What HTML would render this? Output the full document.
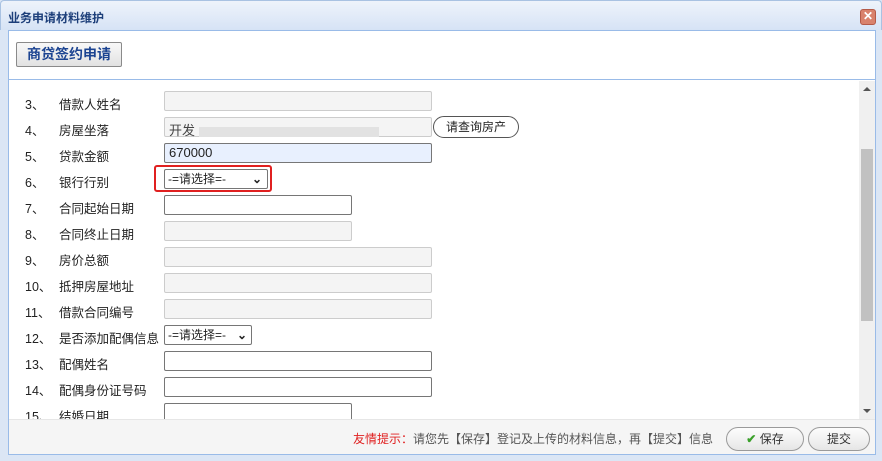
<!DOCTYPE html>
<html><head><meta charset="utf-8"><style>
*{margin:0;padding:0;box-sizing:border-box}
body{width:882px;height:461px;overflow:hidden;background:#dbe6f5;font-family:"Liberation Sans","Noto Sans CJK SC",sans-serif;font-size:12px;color:#222;position:relative}
.title{position:absolute;left:0;top:0;width:882px;height:30px;background:linear-gradient(#eef3fb,#d6e3f5);border:1px solid #a9c2e2;border-bottom:none;border-radius:4px 4px 0 0}
.title span{position:absolute;left:7px;top:8px;font-size:12px;font-weight:bold;color:#1d3f7a}
.close{position:absolute;left:859px;top:8px;width:16px;height:16px;background:#d9826c;border:1px solid #b45a48;border-radius:3px;color:#fff;font-size:12px;font-weight:bold;line-height:13px;text-align:center}
.panel{position:absolute;left:8px;top:30px;width:868px;height:425px;background:#fff;border:1px solid #99bbe8}
.head{position:absolute;left:0;top:0;width:866px;height:49px;border-bottom:1px solid #99bbe8;background:#fff}
.hbtn{position:absolute;left:7px;top:11px;width:106px;height:25px;border:1px solid #8a8a8a;background:linear-gradient(#f8f8f8,#e2e2e2);font-size:14px;font-weight:bold;color:#1b4391;text-align:center;line-height:23px;border-radius:2px}
.scroll{position:absolute;left:0;top:50px;width:866px;height:338px;overflow:hidden}
.sb{position:absolute;left:850px;top:0;width:16px;height:338px;background:#f0f0f0}
.thumb{position:absolute;left:2px;top:68px;width:12px;height:172px;background:#c1c1c1}
.row{position:absolute;left:0;height:26px;width:850px}
.n{position:absolute;left:16px;top:5px;font-size:12.5px}
.l{position:absolute;left:50px;top:5px;font-size:12.5px}
.in{position:absolute;left:155px;top:2px;width:268px;height:20px;border:1px solid #ccc;background:#f4f4f4;border-radius:2px}
.in.w{background:#fff;border-color:#767676}
.s{width:188px}
.sel{position:absolute;left:155px;top:2px;height:20px;border:1px solid #767676;border-radius:2px;background:#fff;font-size:12px;padding-left:3px;line-height:18px}
.foot{position:absolute;left:0;top:388px;width:866px;height:35px;background:#f5f5f5;border-top:1px solid #e6e6e6}
.tip{position:absolute;left:344px;top:10px;color:#555}
.tip b{color:#e02020;font-weight:normal}
.btn{position:absolute;top:7px;height:24px;border:1px solid #9a9a9a;border-radius:12px;background:linear-gradient(#fdfdfd,#e6e6e6);text-align:center;line-height:22px;color:#333}
</style></head><body>
<div class="title"><span>业务申请材料维护</span><div class="close">✕</div></div>
<div class="panel">
<div class="scroll">
 <div class="row" style="top:-24px"><div class="in"></div></div>
 <div class="row" style="top:8px"><span class="n">3、</span><span class="l">借款人姓名</span><div class="in"></div></div>
 <div class="row" style="top:34px"><span class="n">4、</span><span class="l">房屋坐落</span><div class="in" style="padding:2px 4px;font-size:13px;color:#444">开发<span style="display:inline-block;width:180px;height:10px;background:#e2e2e2;margin-left:4px;vertical-align:middle"></span></div><div style="position:absolute;left:424px;top:1px;width:86px;height:22px;border:1px solid #555;border-radius:11px;background:#fff;text-align:center;line-height:20px;font-size:12px">请查询房产</div></div>
 <div class="row" style="top:60px"><span class="n">5、</span><span class="l">贷款金额</span><div class="in" style="background:#e8f0fe;border-color:#777;padding:1px 4px;font-size:13px;color:#222">670000</div></div>
 <div class="row" style="top:86px"><span class="n">6、</span><span class="l">银行行别</span><div style="position:absolute;left:145px;top:-2px;width:118px;height:27px;border:2px solid #e02020;border-radius:3px"></div><div class="sel" style="width:104px">-=请选择=- <span style="position:absolute;right:5px;top:0;font-weight:bold">⌄</span></div></div>
 <div class="row" style="top:112px"><span class="n">7、</span><span class="l">合同起始日期</span><div class="in w s"></div></div>
 <div class="row" style="top:138px"><span class="n">8、</span><span class="l">合同终止日期</span><div class="in s"></div></div>
 <div class="row" style="top:164px"><span class="n">9、</span><span class="l">房价总额</span><div class="in"></div></div>
 <div class="row" style="top:190px"><span class="n">10、</span><span class="l">抵押房屋地址</span><div class="in"></div></div>
 <div class="row" style="top:216px"><span class="n">11、</span><span class="l">借款合同编号</span><div class="in"></div></div>
 <div class="row" style="top:242px"><span class="n">12、</span><span class="l">是否添加配偶信息</span><div class="sel" style="width:88px">-=请选择=- <span style="position:absolute;right:4px;top:0;font-weight:bold">⌄</span></div></div>
 <div class="row" style="top:268px"><span class="n">13、</span><span class="l">配偶姓名</span><div class="in w"></div></div>
 <div class="row" style="top:294px"><span class="n">14、</span><span class="l">配偶身份证号码</span><div class="in w"></div></div>
 <div class="row" style="top:320px"><span class="n">15、</span><span class="l">结婚日期</span><div class="in w s"></div></div>
 <div class="sb"><div style="position:absolute;left:4px;top:6px;border:4px solid transparent;border-bottom:4px solid #555;border-top:none"></div><div class="thumb"></div><div style="position:absolute;left:4px;top:328px;border:4px solid transparent;border-top:4px solid #555;border-bottom:none"></div></div>
</div>
<div class="head"><div class="hbtn">商贷签约申请</div></div>
<div class="foot">
 <div class="tip"><b>友情提示：</b>请您先【保存】登记及上传的材料信息，再【提交】信息</div>
 <div class="btn" style="left:717px;width:78px"><span style="color:#3aa02a;font-weight:bold">✔</span> 保存</div>
 <div class="btn" style="left:799px;width:62px">提交</div>
</div>
</div>
</body></html>
